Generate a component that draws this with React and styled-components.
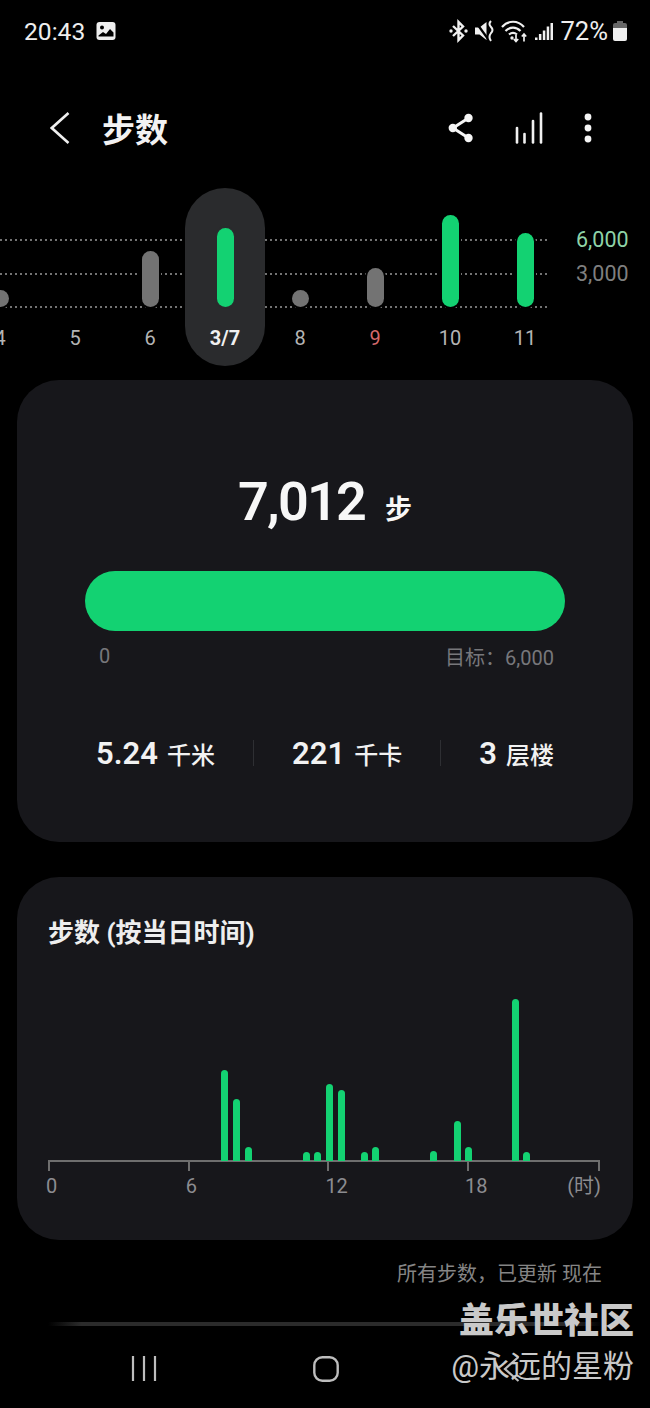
import React from 'react';
import styled, { createGlobalStyle } from 'styled-components';

const GlobalStyle = createGlobalStyle`
  html, body {
    margin: 0;
    padding: 0;
    background: #000;
  }
  body {
    font-family: "Roboto", "Noto Sans CJK SC", sans-serif;
  }
`;

const Screen = styled.div`
  position: relative;
  width: 650px;
  height: 1408px;
  overflow: hidden;
  background: #000;
  display: flex;
  flex-direction: column;
`;

const StatusBar = styled.div`
  height: 62px;
  padding: 0 23px 0 24px;
  display: flex;
  align-items: center;
  justify-content: space-between;
  color: #eee;
`;

const StatusGroup = styled.div`
  display: flex;
  align-items: center;
  gap: ${(p) => p.$gap || 0}px;
  font-size: ${(p) => p.$size}px;
`;

const Header = styled.div`
  height: 100px;
  margin-top: 16px;
  padding: 0 58px 0 50px;
  display: flex;
  align-items: center;
`;

const Title = styled.div`
  margin-left: 32px;
  flex: 1;
  color: #f2f2f2;
  font-size: 33px;
  font-weight: 700;
`;

const HeaderActions = styled.div`
  display: flex;
  align-items: center;
  gap: 41px;
`;

const WeekChart = styled.div`
  position: relative;
  margin-top: 10px;
  height: 178px;
`;

const GuideLine = styled.div`
  position: absolute;
  left: 0;
  width: 550px;
  top: ${(p) => p.$top}px;
  height: 2px;
  background: repeating-linear-gradient(90deg, #737373 0 2px, transparent 2px 5px);
`;

const GuideLabel = styled.div`
  position: absolute;
  left: 576px;
  top: ${(p) => p.$top}px;
  font-size: 21.5px;
  line-height: 26px;
  color: ${(p) => p.$color};
`;

const Days = styled.div`
  position: relative;
  display: flex;
  height: 100%;
  margin-left: -37.5px;
`;

const Day = styled.div`
  width: ${(p) => (p.$selected ? 80 : 75)}px;
  margin: 0 ${(p) => (p.$selected ? -2.5 : 0)}px;
  border-radius: 40px;
  background: ${(p) => (p.$selected ? '#2a2b2d' : 'transparent')};
  display: flex;
  flex-direction: column;
  align-items: center;
`;

const BarSlot = styled.div`
  height: 119px;
  display: flex;
  align-items: flex-end;
`;

const DayBar = styled.div`
  width: 17px;
  border-radius: 9px;
  background: ${(p) => (p.$hit ? '#13d272' : '#737373')};
  box-shadow: 0 0 0 2px ${(p) => (p.$selected ? '#2a2b2d' : '#000')};
`;

const DayLabel = styled.div`
  margin-top: 18px;
  font-size: 20px;
  line-height: 26px;
  font-weight: ${(p) => (p.$selected ? 700 : 400)};
  color: ${(p) => (p.$selected ? '#f0f0f0' : p.$red ? '#d4686a' : '#b4b4b4')};
`;

const Card = styled.div`
  margin: ${(p) => p.$top}px 17px 0;
  height: ${(p) => p.$height}px;
  box-sizing: border-box;
  border-radius: 42px;
  background: #17171b;
`;

const SummaryCard = styled(Card)`
  padding-top: 92px;
`;

const Total = styled.div`
  height: 60px;
  display: flex;
  justify-content: center;
  align-items: center;
  gap: 20px;
  color: #f7f7f7;
`;

const TotalValue = styled.span`
  font-size: 54px;
  line-height: 60px;
  font-weight: 600;
  letter-spacing: -1.8px;
`;

const TotalUnit = styled.span`
  margin-top: 10px;
  font-size: 27px;
  font-weight: 700;
`;

const Progress = styled.div`
  height: 60px;
  margin: 39px 68px 0;
  border-radius: 30px;
  background: #13d272;
`;

const ProgressLabels = styled.div`
  margin: 12px 79px 0 82px;
  height: 26px;
  display: flex;
  justify-content: space-between;
  color: #77777b;
  font-size: 20px;
  line-height: 26px;
`;

const GoalLabel = styled.span`
  margin-top: 2px;
`;

const Stats = styled.div`
  margin-top: 64px;
  height: 40px;
  display: flex;
  justify-content: center;
  align-items: center;
  gap: 38px;
`;

const Stat = styled.div`
  display: flex;
  align-items: baseline;
  gap: 9px;
  color: #f2f2f2;
`;

const StatValue = styled.span`
  font-size: 31px;
  font-weight: 600;
`;

const StatUnit = styled.span`
  font-size: 24px;
  font-weight: 500;
`;

const StatDivider = styled.div`
  width: 1px;
  height: 26px;
  background: #2e2f33;
`;

const HourlyCard = styled(Card)`
  padding: 39px 33px 0 31px;
`;

const CardTitle = styled.div`
  height: 34px;
  color: #eee;
  font-size: 26px;
  line-height: 34px;
  font-weight: 700;
`;

const HourBars = styled.div`
  margin: 41px 0 0 -3px;
  height: 170px;
  display: grid;
  grid-template-columns: repeat(48, 11.62px);
  align-items: end;
  justify-items: center;
`;

const HourBar = styled.div`
  width: 7px;
  border-radius: 4px 4px 0 0;
  background: #13d272;
`;

const AxisTicks = styled.div`
  height: 9px;
  display: grid;
  grid-template-columns: 139.7px 139.7px 139.7px 1fr;
  border-top: 2px solid #6e6e6e;
  border-right: 2px solid #6e6e6e;
  margin-top: -1px;
`;

const AxisTick = styled.div`
  border-left: 2px solid #6e6e6e;
`;

const AxisLabels = styled.div`
  margin: 2px -1px 0 -2px;
  display: grid;
  grid-template-columns: 139.7px 139.7px 139.7px 1fr;
  color: #8c8c90;
  font-size: 20px;
  line-height: 26px;
`;

const AxisCell = styled.div`
  display: flex;
  justify-content: space-between;
`;

const UpdatedNote = styled.div`
  margin-top: 22px;
  padding-right: 48px;
  text-align: right;
  color: #858585;
  font-size: 20px;
  line-height: 24px;
`;

const FadeLine = styled.div`
  margin: 36px 48px 0;
  height: 4px;
  background: linear-gradient(90deg, transparent, #2b2b2b 6%, #2b2b2b 94%, transparent);
`;

const NavBar = styled.div`
  margin-top: 30px;
  padding-left: 131px;
  display: flex;
  align-items: flex-start;
  gap: 156px;
`;

const NavBackSvg = styled.svg`
  margin-left: 8px;
`;

const BatterySvg = styled.svg`
  margin-left: -2px;
`;

const Watermark = styled.div`
  position: absolute;
  right: 16px;
  top: 1300px;
  text-align: right;
  color: #c9c9c9;
`;

const WatermarkTitle = styled.div`
  font-size: 35px;
  line-height: 44px;
  font-weight: 900;
`;

const WatermarkName = styled.div`
  font-size: 31px;
  line-height: 44px;
  margin-top: 1px;
`;

const days = [
  { label: '4', value: 17 },
  { label: '5', value: 0 },
  { label: '6', value: 56 },
  { label: '3/7', value: 79, hit: true, selected: true },
  { label: '8', value: 17 },
  { label: '9', value: 39, red: true },
  { label: '10', value: 92, hit: true },
  { label: '11', value: 74, hit: true },
];

const hourly = {
  15: 91, 16: 62, 17: 14, 22: 9, 23: 9, 24: 77, 25: 71,
  27: 9, 28: 14, 33: 10, 35: 40, 36: 14, 40: 162, 41: 9,
};

const PictureIcon = () => (
  <svg width="20" height="20" viewBox="0 0 20 20" style={{ marginLeft: 11 }}>
    <rect x="0.5" y="1" width="19" height="18" rx="3" fill="#eee" />
    <circle cx="6" cy="6.5" r="2" fill="#000" />
    <path d="M2.5 14.5 L7 11 L10 13 L14 8 L17.5 11.5 V15.5 H2.5 Z" fill="#000" />
  </svg>
);

const BluetoothIcon = () => (
  <svg width="19" height="24" viewBox="0 0 19 24" fill="none" stroke="#f0f0f0" strokeWidth="2.4">
    <path d="M4 7 L14 16.5 L9.5 21 V3 L14 7.5 L4 17" />
    <circle cx="2" cy="12" r="1.7" fill="#f0f0f0" stroke="none" />
    <circle cx="17" cy="12" r="1.7" fill="#f0f0f0" stroke="none" />
  </svg>
);

const MuteIcon = () => (
  <svg width="19" height="24" viewBox="0 0 19 24" fill="none">
    <path d="M0 8.5 H4.5 L11.5 3 V21 L4.5 15.5 H0 Z" fill="#f0f0f0" />
    <path d="M0 2 L13 20" stroke="#000" strokeWidth="2.2" />
    <path d="M16 2 Q13 5 16 8 Q19 11 16 14 Q13 18 16 22" stroke="#f0f0f0" strokeWidth="2" />
  </svg>
);

const WifiIcon = () => (
  <svg width="27" height="24" viewBox="0 0 27 24" fill="none" stroke="#f0f0f0" strokeWidth="2.2">
    <path d="M1 8 C7 1 17 1 23 8" />
    <path d="M4.5 12 C9 7.5 15 7.5 19.5 12" />
    <path d="M8 15.5 C10.5 13.5 13.5 13.5 16 15.5" />
    <path d="M15 16 V22 M12.8 20 L15 22.5 L17.2 20" strokeWidth="1.7" />
    <path d="M23 22.5 V15 M20.8 17.5 L23 15 L25.2 17.5" strokeWidth="1.7" />
    <circle cx="11" cy="19" r="1.7" fill="#f0f0f0" stroke="none" />
  </svg>
);

const SignalIcon = () => (
  <svg width="18" height="20" viewBox="0 0 18 20" fill="#f0f0f0">
    <rect x="0" y="16.5" width="2.5" height="2.5" />
    <rect x="3.9" y="13" width="2.5" height="6" />
    <rect x="7.8" y="9.5" width="2.5" height="9.5" />
    <rect x="11.7" y="5.5" width="2.5" height="13.5" />
    <rect x="15.5" y="2" width="2.5" height="17" />
  </svg>
);

const BatteryIcon = () => (
  <BatterySvg width="14" height="22" viewBox="0 0 14 22">
    <path d="M4 1 H10 V3 H12 Q14 3 14 5 V8 H0 V5 Q0 3 2 3 H4 Z" fill="#666" />
    <path d="M0 8 H14 V19 Q14 21 12 21 H2 Q0 21 0 19 Z" fill="#eee" />
  </BatterySvg>
);

const BackIcon = () => (
  <svg width="20" height="32" viewBox="0 0 20 32" fill="none" stroke="#efefef" strokeWidth="2.6">
    <path d="M18.5 1 L1.8 16 L18.5 31" />
  </svg>
);

const ShareIcon = () => (
  <svg width="26" height="30" viewBox="0 0 26 30" fill="#f5f5f5" stroke="#f5f5f5">
    <path d="M20.5 5 L5 15 L20.5 25" fill="none" strokeWidth="3" />
    <circle cx="20.5" cy="5" r="4.2" stroke="none" />
    <circle cx="4.8" cy="15" r="4.2" stroke="none" />
    <circle cx="20.5" cy="25" r="4.2" stroke="none" />
  </svg>
);

const TrendIcon = () => (
  <svg width="28" height="32" viewBox="0 0 28 32" stroke="#f0f0f0" strokeWidth="2.6" strokeLinecap="round">
    <path d="M2 16 V30.5" />
    <path d="M9.5 22 V30.5" />
    <path d="M18 9 V30.5" />
    <path d="M26 1.5 V30.5" />
  </svg>
);

const MoreIcon = () => (
  <svg width="8" height="30" viewBox="0 0 8 30" fill="#f5f5f5">
    <circle cx="4" cy="4" r="3.4" />
    <circle cx="4" cy="15" r="3.4" />
    <circle cx="4" cy="26" r="3.4" />
  </svg>
);

const RecentsIcon = () => (
  <svg width="26" height="26" viewBox="0 0 26 26" stroke="#bdbdbd" strokeWidth="2.2">
    <path d="M2 0 V25 M13 0 V25 M24 0 V25" />
  </svg>
);

const HomeIcon = () => (
  <svg width="26" height="26" viewBox="0 0 26 26" fill="none" stroke="#bdbdbd" strokeWidth="2.4">
    <rect x="1.3" y="1.3" width="23.4" height="23.4" rx="8" />
  </svg>
);

const NavBackIcon = () => (
  <NavBackSvg width="17" height="26" viewBox="0 0 17 26" fill="none" stroke="#bdbdbd" strokeWidth="2.2">
    <path d="M15.5 1 L2 13 L15.5 25" />
  </NavBackSvg>
);

const App = () => (
  <Screen>
    <GlobalStyle />
    <StatusBar>
      <StatusGroup $size={24.6}>
        20:43
        <PictureIcon />
      </StatusGroup>
      <StatusGroup $gap={7} $size={25.6}>
        <BluetoothIcon />
        <MuteIcon />
        <WifiIcon />
        <SignalIcon />
        72%
        <BatteryIcon />
      </StatusGroup>
    </StatusBar>

    <Header>
      <BackIcon />
      <Title>步数</Title>
      <HeaderActions>
        <ShareIcon />
        <TrendIcon />
        <MoreIcon />
      </HeaderActions>
    </Header>

    <WeekChart>
      <GuideLine $top={51} />
      <GuideLine $top={85} />
      <GuideLine $top={118} />
      <GuideLabel $top={39} $color="#8fd4a8">6,000</GuideLabel>
      <GuideLabel $top={73} $color="#7f7f7f">3,000</GuideLabel>
      <Days>
        {days.map((d) => (
          <Day key={d.label} $selected={d.selected}>
            <BarSlot>
              {d.value > 0 && (
                <DayBar $hit={d.hit} $selected={d.selected} style={{ height: d.value }} />
              )}
            </BarSlot>
            <DayLabel $selected={d.selected} $red={d.red}>{d.label}</DayLabel>
          </Day>
        ))}
      </Days>
    </WeekChart>

    <SummaryCard $top={14} $height={462}>
      <Total>
        <TotalValue>7,012</TotalValue>
        <TotalUnit>步</TotalUnit>
      </Total>
      <Progress />
      <ProgressLabels>
        <span>0</span>
        <GoalLabel>目标：6,000</GoalLabel>
      </ProgressLabels>
      <Stats>
        <Stat>
          <StatValue>5.24</StatValue>
          <StatUnit>千米</StatUnit>
        </Stat>
        <StatDivider />
        <Stat>
          <StatValue>221</StatValue>
          <StatUnit>千卡</StatUnit>
        </Stat>
        <StatDivider />
        <Stat>
          <StatValue>3</StatValue>
          <StatUnit>层楼</StatUnit>
        </Stat>
      </Stats>
    </SummaryCard>

    <HourlyCard $top={35} $height={363}>
      <CardTitle>步数 (按当日时间)</CardTitle>
      <HourBars>
        {Array.from({ length: 48 }, (_, i) => (
          <div key={i}>
            {hourly[i] && <HourBar style={{ height: hourly[i] }} />}
          </div>
        ))}
      </HourBars>
      <AxisTicks>
        <AxisTick />
        <AxisTick />
        <AxisTick />
        <AxisTick />
      </AxisTicks>
      <AxisLabels>
        <span>0</span>
        <span>6</span>
        <span>12</span>
        <AxisCell>
          <span>18</span>
          <span>(时)</span>
        </AxisCell>
      </AxisLabels>
    </HourlyCard>

    <UpdatedNote>所有步数，已更新 现在</UpdatedNote>
    <FadeLine />

    <NavBar>
      <RecentsIcon />
      <HomeIcon />
      <NavBackIcon />
    </NavBar>

    <Watermark>
      <WatermarkTitle>盖乐世社区</WatermarkTitle>
      <WatermarkName>@永远的星粉</WatermarkName>
    </Watermark>
  </Screen>
);

export default App;
